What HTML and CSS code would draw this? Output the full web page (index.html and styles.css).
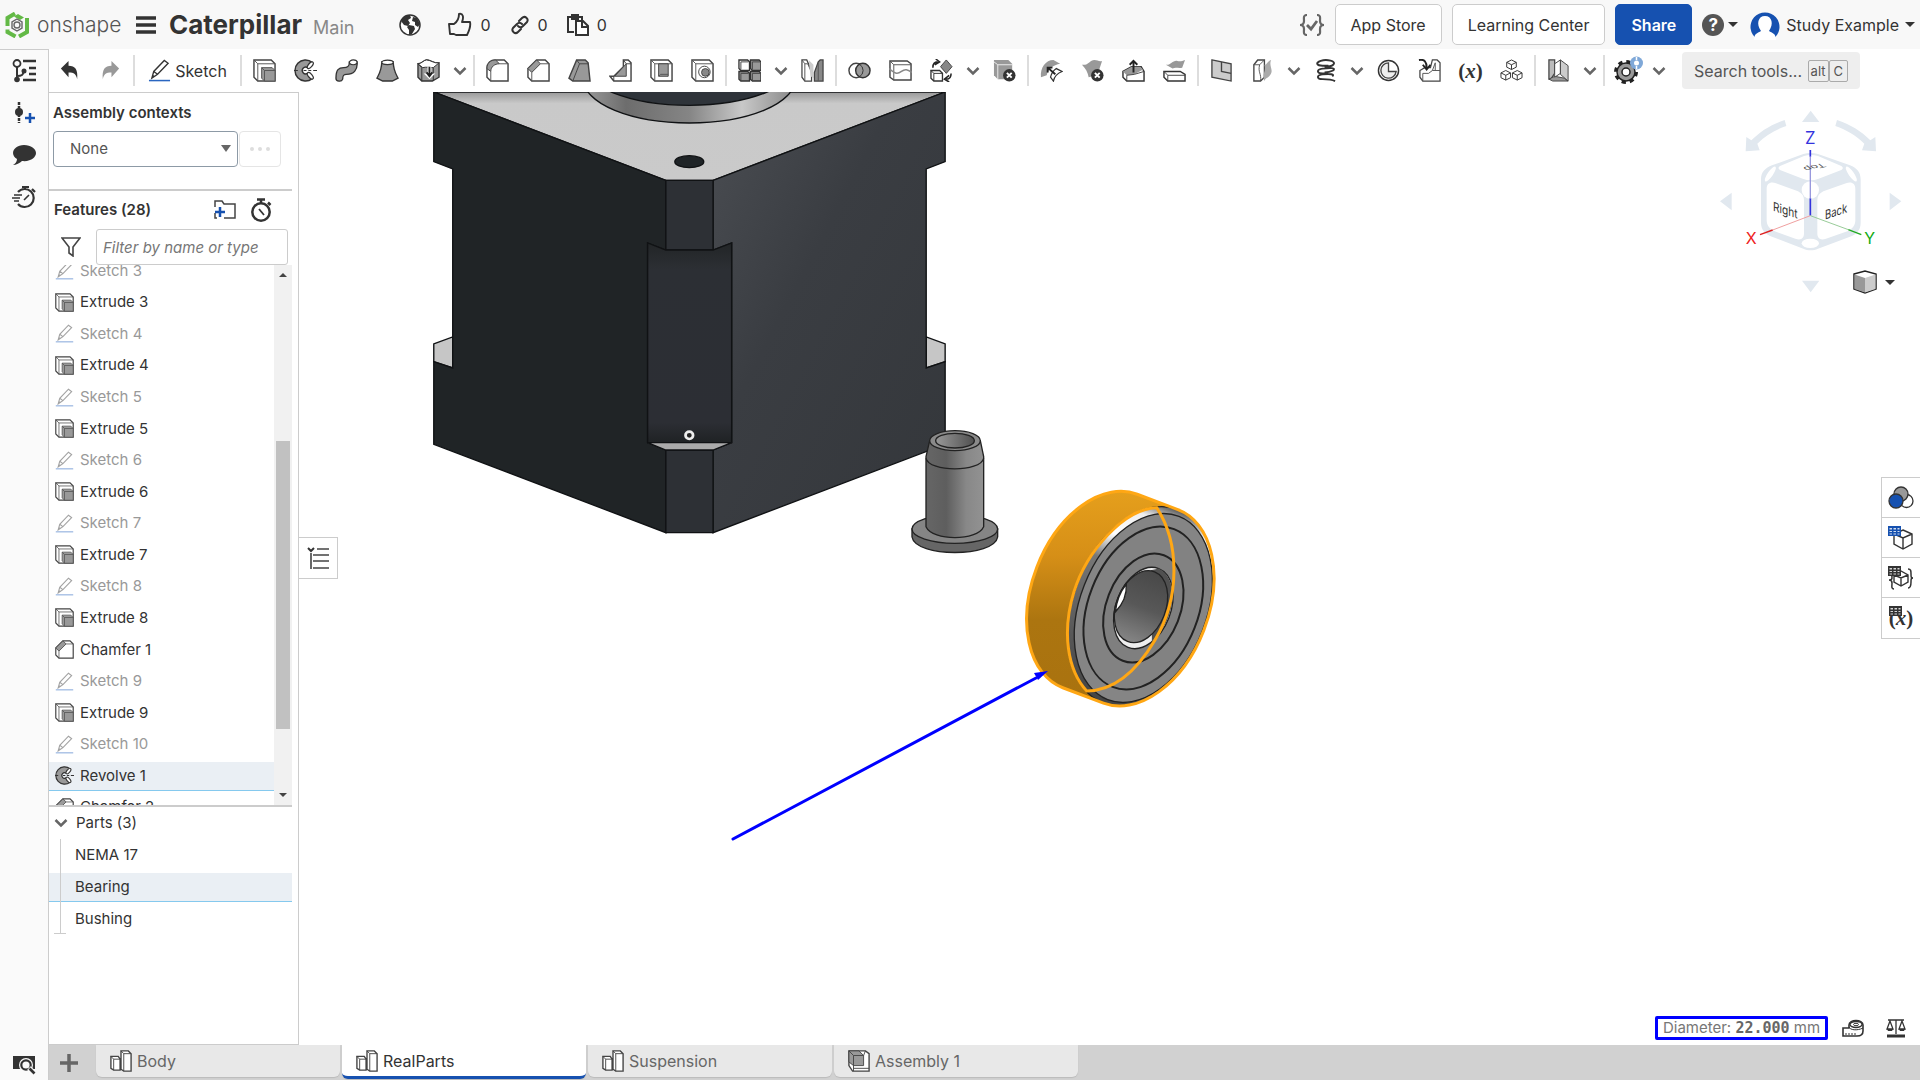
FILE: index.html
```html
<!DOCTYPE html>
<html lang="en">
<head>
  <meta charset="UTF-8" />
  <meta name="viewport" content="width=device-width, initial-scale=1.0" />
  <title>Caterpillar | RealParts</title>
  <link rel="stylesheet" href="styles.css">
</head>
<body>
  <!-- Icon sprite -->
  <svg class="sprite" aria-hidden="true">
    <symbol id="chev" viewBox="0 0 14 10"><path d="M1.500 2l5.500 5.500L12.500 2" fill="none" stroke="#666" stroke-width="2.500"/></symbol>
    <symbol id="undo" viewBox="0 0 24 24"><path d="M3 10l8-8v5c7 0 10 4 9 14-1-5-3-7-9-7v5z" fill="currentColor"/></symbol>
    <symbol id="redo" viewBox="0 0 24 24"><path d="M21 10l-8-8v5C6 7 3 11 4 21c1-5 3-7 9-7v5z" fill="currentColor"/></symbol>
    <symbol id="pencil" viewBox="0 0 24 24"><path d="M4 20l2-7L17 1.500l4 3L10 16zM6 13l4 3M4 20l2-3" fill="none" stroke="#333" stroke-width="1.400"/><path d="M1 22.500h22" stroke="#2a66c0" stroke-width="1.600"/></symbol>
    <symbol id="extrude" viewBox="0 0 24 24"><path d="M1 1h18l4 4v18H5l-4-4z" fill="#fff" stroke="#444" stroke-width="1.500"/><path d="M1 1l4 4v18M5 5h18" fill="none" stroke="#555"/><path d="M9 9h11l3 3v11H12l-3-3z" fill="#999" stroke="#555"/><path d="M9 9l3 3h11M12 12v11" fill="none" stroke="#555"/></symbol>
    <symbol id="revolve" viewBox="0 0 24 24"><path d="M19 3.500A11 11 0 1 0 19 20.500L14 15A3.500 3.500 0 1 1 14 9z" fill="#999" stroke="#333" stroke-width="1.500"/><ellipse cx="17" cy="6.500" rx="2" ry="4.200" transform="rotate(40 17 6.500)" fill="#fff" stroke="#333" stroke-width="1.300"/><ellipse cx="17" cy="17.500" rx="2" ry="4.200" transform="rotate(-40 17 17.500)" fill="#fff" stroke="#333" stroke-width="1.300"/><path d="M0 12h4M10 12h3M15 12h3M20 12h4" stroke="#333" stroke-width="1.300"/></symbol>
    <symbol id="sweep" viewBox="0 0 24 24"><path d="M1 20c0-9 3-11 8-11 4 0 6-1 6-6h8c1 9-4 13-11 13-3 0-4 1-4 5-1 3-7 3-7-1z" fill="#999" stroke="#333" stroke-width="1.400"/><ellipse cx="19" cy="3.500" rx="4" ry="2.500" fill="#fff" stroke="#333" stroke-width="1.300"/></symbol>
    <symbol id="loft" viewBox="0 0 24 24"><path d="M6 3c0 8-2 11-5 17l6 3h10l6-3C20 14 18 11 18 3z" fill="#999" stroke="#333" stroke-width="1.400"/><ellipse cx="12" cy="3.500" rx="6" ry="2.400" fill="#fff" stroke="#333" stroke-width="1.300"/></symbol>
    <symbol id="thicken" viewBox="0 0 24 24"><path d="M1 5c4 0 6-4 9-4 4 0 8 4 13 3v15l-7 4H5l-4-4z" fill="#999" stroke="#333" stroke-width="1.400"/><path d="M1 5c4 0 6-4 9-4 4 0 8 4 13 3l-6 5c-5 0-7-1-11 0z" fill="#fff" stroke="#333"/><path d="M1 5l4 4v14M17 9v14" fill="none" stroke="#333"/><path d="M11 8h4v7h4l-6 6-6-6h4z" fill="#fff"/><path d="M13 8v10M10 14l3 4 3-4" stroke="#222" stroke-width="2" fill="none"/></symbol>
    <symbol id="fillet" viewBox="0 0 24 24"><path d="M1 10C1 4 5 1 10 1h9l4 4v18H5l-4-4z" fill="#fff" stroke="#444" stroke-width="1.500"/><path d="M1 10C1 4 5 1 10 1l4 4c-5 0-9 3-9 8z" fill="#999" stroke="#444"/><path d="M5 13v10M14 5h9" stroke="#555"/></symbol>
    <symbol id="chamfer" viewBox="0 0 24 24"><path d="M1 10L10 1h9l4 4v18H5l-4-4z" fill="#fff" stroke="#444" stroke-width="1.500"/><path d="M1 10l9-9 4 4-9 9z" fill="#999" stroke="#444"/><path d="M5 14v9M14 5h9" stroke="#555"/></symbol>
    <symbol id="draft" viewBox="0 0 24 24"><path d="M9 1h9l3 3 2 19H5l-4-3z" fill="#999" stroke="#444" stroke-width="1.500"/><path d="M9 1l3 4L5 23M12 5h9" fill="none" stroke="#444"/></symbol>
    <symbol id="rib" viewBox="0 0 24 24"><path d="M15 1h5l3 3v19H5l-4-5h4L15 8z" fill="#fff" stroke="#444" stroke-width="1.500"/><path d="M18 5v13H6z" fill="#999" stroke="#444"/><path d="M15 1l3 4h5M5 18v5" fill="none" stroke="#444"/></symbol>
    <symbol id="shell" viewBox="0 0 24 24"><path d="M1 1h18l4 4v18H5l-4-4z" fill="#fff" stroke="#444" stroke-width="1.500"/><path d="M1 1l4 4v18M5 5h18" fill="none" stroke="#555"/><path d="M9 5h10v13H9z" fill="#999" stroke="#444"/><path d="M9 18l2-2h8" fill="none" stroke="#555"/></symbol>
    <symbol id="hole" viewBox="0 0 24 24"><path d="M1 1h18l4 4v18H5l-4-4z" fill="#fff" stroke="#444" stroke-width="1.500"/><path d="M1 1l4 4v18M5 5h18" fill="none" stroke="#555"/><circle cx="14" cy="13.500" r="6" fill="#fff" stroke="#444"/><circle cx="15" cy="14" r="4" fill="#888" stroke="#444"/></symbol>
    <symbol id="pattern" viewBox="0 0 24 24"><path d="M1 1h9l2 2v9H3l-2-2z" fill="#fff" stroke="#333" stroke-width="1.400"/><path d="M13 1h9l2 2v9h-9l-2-2zM1 13h9l2 2v8H3l-2-2zM13 13h9l2 2v8h-9l-2-2z" fill="#999" stroke="#333" stroke-width="1.400"/><path d="M3 3h8M15 3h8M3 15h8M15 15h8M3 3v8M15 3v8M3 15v8M15 15v8" stroke="#444"/></symbol>
    <symbol id="mirror" viewBox="0 0 24 24"><path d="M1 1h5l5 11v11H4l-3-4z" fill="#fff" stroke="#444" stroke-width="1.300"/><path d="M4 5v18M1 1l3 4h3l4 9" fill="none" stroke="#555"/><path d="M8 1l5 5v14l-3-2z" fill="#ccc"/><path d="M14 14l4-11 2-2h3v22h-9z" fill="#888" stroke="#444" stroke-width="1.300"/><path d="M18 3v20" stroke="#555"/></symbol>
    <symbol id="boolean" viewBox="0 0 24 24"><circle cx="8.500" cy="12" r="7.500" fill="#fff" stroke="#444" stroke-width="1.500"/><circle cx="15.500" cy="12" r="7.500" fill="#999" stroke="#333" stroke-width="1.500"/><path d="M12 5.500a7.500 7.500 0 0 1 0 13" fill="none" stroke="#333"/></symbol>
    <symbol id="split" viewBox="0 0 24 24"><path d="M1 2h18l4 3v17H5l-4-3z" fill="#fff" stroke="#444" stroke-width="1.500"/><path d="M1 2l4 4h18M5 6v16" fill="none" stroke="#555"/><path d="M0 10c7 6 9 6 13 3s6-2 11 1" fill="none" stroke="#888" stroke-width="1.600"/></symbol>
    <symbol id="transform" viewBox="0 0 24 24"><path d="M1 12h9l3 3v8H4l-3-3z" fill="#fff" stroke="#333" stroke-width="1.400"/><path d="M1 12l3 3h9M4 15v8" fill="none" stroke="#333"/><path d="M17 1l6 7-6 7-6-7z" fill="#888" stroke="#444"/><path d="M3 9c0-4 2-6 5-6M6 0l4 3-5 3M22 15c0 4-2 6-5 6M20 17l-5 4 5 3" stroke="#222" stroke-width="1.600" fill="none"/></symbol>
    <symbol id="delpart" viewBox="0 0 24 24"><path d="M1 1h15l4 4v16H5l-4-4z" fill="#999"/><path d="M1 3l4 3h15M5 6v15" stroke="#eee" fill="none"/><circle cx="17" cy="17" r="6.500" fill="#333"/><path d="M14.500 14.500l5 5M19.500 14.500l-5 5" stroke="#fff" stroke-width="2"/></symbol>
    <symbol id="modfillet" viewBox="0 0 24 24"><path d="M1 19C0 9 6 1 14 1l7 4C14 6 8 11 7 17z" fill="#999"/><path d="M14 23l-3-4c1-4 3-7 6-9l6 3c-5 2-8 5-9 10z" fill="#fff" stroke="#333" stroke-width="1.300"/><path d="M16 16L8 9M8 14V9h5" stroke="#222" stroke-width="2" fill="none"/></symbol>
    <symbol id="delface" viewBox="0 0 24 24"><path d="M1 6c7 1 8-5 13-5 3 0 5 2 8 1l-5 15-9 2C7 14 5 10 1 6z" fill="#999"/><circle cx="17" cy="17" r="6.500" fill="#333"/><path d="M14.500 14.500l5 5M19.500 14.500l-5 5" stroke="#fff" stroke-width="2"/></symbol>
    <symbol id="moveface" viewBox="0 0 24 24"><path d="M1 13l9-5h10l3 5v10H5l-4-4z" fill="#fff" stroke="#333" stroke-width="1.500"/><path d="M1 13l9-5h9l3 3-9 5-8 1z" fill="#999"/><path d="M5 17l8-1 10-3M5 17v6" stroke="#444" fill="none"/><path d="M12 14V3M8 6l4-4 4 4" stroke="#222" stroke-width="2" fill="none"/></symbol>
    <symbol id="replface" viewBox="0 0 24 24"><path d="M3 6c5 1 7-5 12-4 3 1 5 0 8-1l-3 8c-4 1-7-1-10 1z" fill="#999"/><path d="M1 13h17l5 3v7H5l-4-4z" fill="#fff" stroke="#333" stroke-width="1.500"/><path d="M1 13l4 4h18M5 17v6" fill="none" stroke="#444"/></symbol>
    <symbol id="plane" viewBox="0 0 24 24"><path d="M2 1l20 4v18L2 19z" fill="#ccc" stroke="#444" stroke-width="1.400"/><path d="M12 3v10l10 2" fill="none" stroke="#444" stroke-width="1.400"/></symbol>
    <symbol id="surface" viewBox="0 0 24 24"><path d="M3 6l4-5h7v18l-4 4H3z" fill="#fff" stroke="#444" stroke-width="1.400"/><path d="M14 6c3 0 3-4 7-5-3 7 4 11-2 17-2 2-4 2-5 5-3-8 2-9 0-17z" fill="#aaa"/><path d="M3 6h6l5-5M9 6c-2 8 2 9 1 17" fill="none" stroke="#555"/></symbol>
    <symbol id="helix" viewBox="0 0 24 24"><path d="M20 6C24 2 13 0 7 2 1 4 3 7 9 7h6M20 12c3-3-3-3-11-2-7 1-6 5 0 5h6M19 18c3-2-2-3-10-2-7 1-6 5 0 5 5 0 9 0 13 2M20 6c-1 1-4 2-9 2M20 12c-2 1-5 2-9 2" fill="none" stroke="#333" stroke-width="2"/></symbol>
    <symbol id="pie" viewBox="0 0 24 24"><circle cx="12" cy="12" r="10.500" fill="#fff" stroke="#333" stroke-width="1.500"/><path d="M12 4a8 8 0 1 0 8 9h-8z" fill="#eee" stroke="#444" stroke-width="1.400"/></symbol>
    <symbol id="derive" viewBox="0 0 24 24"><path d="M7 9h6l2-8h5l3 3v19H5l-3-4v-7z" fill="#fff" stroke="#444" stroke-width="1.300"/><path d="M15 12l3-8v8M5 15h6l4-3 8 0M5 15v8" stroke="#555" fill="none"/><path d="M1 1c6-1 8 2 8 8M5 6l4 5 4-5" fill="none" stroke="#222" stroke-width="2"/></symbol>
    <symbol id="cubes" viewBox="0 0 24 24"><g fill="#fff" stroke="#333"><path d="M12 1l5 2.500v5L12 11 7 8.500v-5zM7 3.500L12 6l5-2.500M12 6v5M6 12l5 2.500v5L6 22l-5-2.500v-5zM1 14.500L6 17l5-2.500M6 17v5M18 12l5 2.500v5L18 22l-5-2.500v-5zM13 14.500l5 2.500 5-2.500M18 17v5"/></g></symbol>
    <symbol id="sheet" viewBox="0 0 24 24"><path d="M2 1h6v14l-4 6H2z" fill="#bbb" stroke="#444" stroke-width="1.300"/><path d="M2 21l6-3 10 2 4 3H6z" fill="#999" stroke="#444"/><path d="M8 5l6-4v14l-6 4z" fill="#fff" stroke="#444"/><path d="M14 1l8 6v16l-8-7z" fill="#ccc" stroke="#444"/></symbol>
    <symbol id="gear" viewBox="0 0 30 30"><circle cx="13" cy="16" r="10" fill="none" stroke="#222" stroke-width="4" stroke-dasharray="4.100 3.754"/><circle cx="13" cy="16" r="9" fill="#999" stroke="#222" stroke-width="1.500"/><circle cx="13" cy="16" r="4" fill="#fff" stroke="#222" stroke-width="1.500"/><circle cx="23.500" cy="7" r="6.500" fill="#7fa8d8"/><circle cx="23.500" cy="7" r="2.500" fill="#fff"/><path d="M23.500 1v3M23.500 10v3" stroke="#fff" stroke-width="1.500"/></symbol>
    <symbol id="grid" viewBox="0 0 13 10"><path d="M0 0h13v10H0z" fill="currentColor"/><path d="M1.500 2h2.500v1.500H1.500zM5.500 2H8v1.500H5.500zM9.500 2h2v1.500h-2zM1.500 5h2.500v1H1.500zM5.500 5H8v1H5.500zM9.500 5h2v1h-2zM1.500 7.500h2.500v1H1.500zM5.500 7.500H8v1H5.500zM9.500 7.500h2v1h-2z" fill="#fff" opacity=".8"/></symbol>
    <symbol id="partstudio" viewBox="0 0 24 24"><path d="M1 7h8l2 3v12H4l-3-2zM12 1h8l3 3v19h-8l-3-2z" fill="#fff" stroke="#444" stroke-width="1.500"/><path d="M1 7l3 3h7M4 10v12M12 1l3 3h8M15 4v19" fill="none" stroke="#444"/></symbol>
    <symbol id="assembly" viewBox="0 0 24 24"><path d="M1 1h18l4 3v19H5l-4-6z" fill="#fff" stroke="#444" stroke-width="1.500"/><path d="M1 1h11l5 5v11H6l-5-4z" fill="#999" stroke="#444"/><path d="M1 1l5 5h11M6 6v17M19 1l-2 5M6 20h17" fill="none" stroke="#444"/></symbol>
    <symbol id="timer" viewBox="0 0 24 24"><circle cx="12" cy="14" r="8.700" fill="none" stroke="#333" stroke-width="2.500"/><path d="M8 1.500h8M12 2v3M19 4.500l2.500 2.500" stroke="#333" stroke-width="2.500"/><path d="M10 11l5 6" stroke="#333" stroke-width="1.800"/></symbol>
  </svg>

  <header class="topbar">
    <a class="brand" href="#">
      <svg width="24" height="26" viewBox="0 0 24 26"><path d="M10 1.500L2.500 6v8M22 6v14l-8 4.500M2.500 17.500V20l8 4.500" fill="none" stroke="#63b946" stroke-width="4"/><path d="M9 4.500L13 2l6 3.500-4 2.500" fill="#63b946"/><path d="M12 7l5 3v6l-5 3-5-3v-6z" fill="#f8f8f8" stroke="#666" stroke-width="1.400"/><circle cx="12" cy="13" r="3" fill="none" stroke="#666" stroke-width="1.400"/></svg>
      <span>onshape</span>
    </a>
    <button class="plain menu" aria-label="Menu"><svg width="20" height="20" viewBox="0 0 20 20"><path d="M0 3h20M0 10h20M0 17h20" stroke="#333" stroke-width="3.500"/></svg></button>
    <h1>Caterpillar</h1>
    <span class="branch">Main</span>
    <button class="plain globe" aria-label="Public document"><svg width="24" height="24" viewBox="0 0 24 24"><circle cx="12" cy="12" r="10" fill="#fff" stroke="#333" stroke-width="1.500"/><path d="M4 6c3-4 6-4 8-4l1 3-3 2 2 3-2 3-4-1-3-4zM11 12l5 1 1 3-3 5-3 1v-5l-2-3zM15 4l4 1 3 6-2 3-3-2 0-3-3-1z" fill="#333"/></svg></button>
    <button class="plain stat"><svg width="24" height="26" viewBox="0 0 24 26"><path d="M1 12h5c3-2 5-5 5-10 4-1 5 3 3 8h8c1 4-1 9-3 13H8l-2-1H2z" fill="none" stroke="#333" stroke-width="1.900" stroke-linejoin="round"/></svg>0</button>
    <button class="plain stat"><svg width="20" height="20" viewBox="0 0 20 20"><g fill="none" stroke="#333" stroke-width="2" stroke-linecap="round"><path d="M9 6l3-3c3-3 7 1 5 4l-4 4c-2 2-4 1-5 0"/><path d="M11 14l-3 3c-3 3-7-1-5-4l4-4c2-2 4-1 5 0"/></g></svg>0</button>
    <button class="plain stat"><svg width="22" height="22" viewBox="0 0 22 22"><path d="M7 18H1V3h14v4M5 1h6v4H5z" fill="none" stroke="#333" stroke-width="2"/><path d="M9 7h7l5 5v9H9zM15 7v6h6" fill="#fff" stroke="#333" stroke-width="2"/></svg>0</button>

    <div class="top-right">
      <button class="plain" aria-label="Custom checks"><svg width="26" height="22" viewBox="0 0 26 22"><path d="M8 1C4 1 5 4 5 7s-1 4-4 4c3 0 4 1 4 4s-1 6 3 6M18 1c4 0 3 3 3 6s1 4 4 4c-3 0-4 1-4 4s1 6-3 6" fill="none" stroke="#666" stroke-width="2.200"/><path d="M8 11l4 4 6-8" fill="none" stroke="#666" stroke-width="2.800"/></svg></button>
      <button class="btn">App Store</button>
      <button class="btn">Learning Center</button>
      <button class="btn share">Share</button>
      <button class="plain help" aria-label="Help"><span class="q">?</span><span class="caret"></span></button>
      <button class="plain user"><svg width="30" height="30" viewBox="0 0 30 30"><path d="M7 29A14.500 14.500 0 1 1 23 29z" fill="#1651b0"/><path d="M4 30c0-7 4-7 7-9-5-7-3-15 4-15s9 8 4 15c3 2 7 2 7 9z" fill="#fff"/></svg>Study Example<span class="caret"></span></button>
    </div>
  </header>

  <div class="app">
    <nav class="rail">
      <button class="plain" aria-label="Feature list"><svg width="24" height="24" viewBox="0 0 24 24"><circle cx="5" cy="4.500" r="3.500" fill="none" stroke="#333" stroke-width="1.800"/><path d="M5 8v12M5 17c5 0 6-1 7-5" fill="none" stroke="#333" stroke-width="2"/><circle cx="5" cy="20.500" r="2.800" fill="#333"/><circle cx="12" cy="12" r="2.500" fill="#333"/><path d="M11 2h13M17 9h7M17 15h7M11 21h13" stroke="#333" stroke-width="2.400"/></svg></button>
      <button class="plain" aria-label="Insert"><svg width="24" height="24" viewBox="0 0 24 24"><path d="M7 1v21" stroke="#333" stroke-width="2.500" stroke-dasharray="3 1"/><circle cx="7" cy="11" r="4" fill="#333"/><path d="M18 12v10M13 17h10" stroke="#1651b0" stroke-width="2.500"/></svg></button>
      <button class="plain" aria-label="Comments"><svg width="24" height="24" viewBox="0 0 24 24"><path d="M12 2c7 0 12 4 12 8s-5 9-14 8c-2 2-6 4-9 4 2-1 4-3 4-6-8-5-3-14 7-14z" fill="#333"/></svg></button>
      <button class="plain" aria-label="Performance"><svg width="24" height="24" viewBox="0 0 24 24"><path d="M6 7a9 9 0 1 1 0 12M10 2h7M13 2v3M20 4l3 3" fill="none" stroke="#333" stroke-width="2.200"/><path d="M2 10h8M0 13h8M2 16h5M12 15l5-5" stroke="#333" stroke-width="1.600"/></svg></button>
      <button class="plain rail-end" aria-label="Find tab"><svg width="24" height="22" viewBox="0 0 24 22"><path d="M1 3h22v13H1z" fill="#333"/><circle cx="14" cy="12" r="7" fill="#fafafa"/><circle cx="14" cy="12" r="4.700" fill="none" stroke="#333" stroke-width="2.200"/><path d="M17 15l6 6" stroke="#fafafa" stroke-width="5"/><path d="M17.500 15.500l5 5" stroke="#333" stroke-width="2.600"/></svg></button>
    </nav>

    <div class="content">
      <div class="toolbar" role="toolbar">
        <button class="tool" aria-label="Undo"><svg><use href="#undo"/></svg></button>
        <button class="tool off" aria-label="Redo"><svg><use href="#redo"/></svg></button>
        <i class="sep"></i>
        <button class="tool sketch"><svg><use href="#pencil"/></svg>Sketch</button>
        <i class="sep"></i>
        <button class="tool" aria-label="Extrude"><svg><use href="#extrude"/></svg></button>
        <button class="tool" aria-label="Revolve"><svg><use href="#revolve"/></svg></button>
        <button class="tool" aria-label="Sweep"><svg><use href="#sweep"/></svg></button>
        <button class="tool" aria-label="Loft"><svg><use href="#loft"/></svg></button>
        <button class="tool" aria-label="Thicken"><svg><use href="#thicken"/></svg></button>
        <button class="more" aria-label="More solids"><svg><use href="#chev"/></svg></button>
        <i class="sep"></i>
        <button class="tool" aria-label="Fillet"><svg><use href="#fillet"/></svg></button>
        <button class="tool" aria-label="Chamfer"><svg><use href="#chamfer"/></svg></button>
        <button class="tool" aria-label="Draft"><svg><use href="#draft"/></svg></button>
        <button class="tool" aria-label="Rib"><svg><use href="#rib"/></svg></button>
        <button class="tool" aria-label="Shell"><svg><use href="#shell"/></svg></button>
        <button class="tool" aria-label="Hole"><svg><use href="#hole"/></svg></button>
        <i class="sep"></i>
        <button class="tool" aria-label="Pattern"><svg><use href="#pattern"/></svg></button>
        <button class="more" aria-label="More patterns"><svg><use href="#chev"/></svg></button>
        <button class="tool" aria-label="Mirror"><svg><use href="#mirror"/></svg></button>
        <i class="sep"></i>
        <button class="tool" aria-label="Boolean"><svg><use href="#boolean"/></svg></button>
        <button class="tool" aria-label="Split"><svg><use href="#split"/></svg></button>
        <button class="tool" aria-label="Transform"><svg><use href="#transform"/></svg></button>
        <button class="more" aria-label="More transforms"><svg><use href="#chev"/></svg></button>
        <button class="tool" aria-label="Delete part"><svg><use href="#delpart"/></svg></button>
        <i class="sep"></i>
        <button class="tool" aria-label="Modify fillet"><svg><use href="#modfillet"/></svg></button>
        <button class="tool" aria-label="Delete face"><svg><use href="#delface"/></svg></button>
        <button class="tool" aria-label="Move face"><svg><use href="#moveface"/></svg></button>
        <button class="tool" aria-label="Replace face"><svg><use href="#replface"/></svg></button>
        <i class="sep"></i>
        <button class="tool" aria-label="Plane"><svg><use href="#plane"/></svg></button>
        <button class="tool" aria-label="Surface"><svg><use href="#surface"/></svg></button>
        <button class="more" aria-label="More surfaces"><svg><use href="#chev"/></svg></button>
        <button class="tool" aria-label="Helix"><svg><use href="#helix"/></svg></button>
        <button class="more" aria-label="More curves"><svg><use href="#chev"/></svg></button>
        <button class="tool" aria-label="Composite part"><svg><use href="#pie"/></svg></button>
        <button class="tool" aria-label="Derived"><svg><use href="#derive"/></svg></button>
        <button class="tool var" aria-label="Variable">(<em>x</em>)</button>
        <button class="tool" aria-label="Configurations"><svg><use href="#cubes"/></svg></button>
        <i class="sep"></i>
        <button class="tool" aria-label="Sheet metal"><svg><use href="#sheet"/></svg></button>
        <button class="more" aria-label="More sheet metal"><svg><use href="#chev"/></svg></button>
        <i class="sep"></i>
        <button class="tool gear" aria-label="Custom features"><svg><use href="#gear"/></svg></button>
        <button class="more" aria-label="More features"><svg><use href="#chev"/></svg></button>
        <button class="search">Search tools...<span class="keys"><kbd>alt</kbd><kbd>C</kbd></span></button>
      </div>

      <div class="workspace">
        <aside class="panel">
          <section class="contexts">
            <h2><label for="ctx">Assembly contexts</label></h2>
            <div class="ctx-row">
              <div class="select-wrap"><select id="ctx"><option>None</option></select></div>
              <button class="dots" aria-label="Context options"><i></i><i></i><i></i></button>
            </div>
          </section>
          <section class="features">
            <div class="feat-head">
              <h2>Features (28)</h2>
              <button class="plain" aria-label="Add folder"><svg width="24" height="22" viewBox="0 0 24 22"><path d="M2 8V2h7l2 3h11v14H11M2 14v5h2" fill="none" stroke="#444" stroke-width="1.500"/><path d="M7 8v10M2 13h10" stroke="#1651b0" stroke-width="2.500"/></svg></button>
              <button class="plain" aria-label="Regeneration times"><svg width="24" height="24"><use href="#timer"/></svg></button>
            </div>
            <div class="filter">
              <svg width="20" height="20" viewBox="0 0 20 20"><path d="M1 1h18l-7 9v9l-4-3v-6z" fill="none" stroke="#444" stroke-width="1.600"/></svg>
              <input type="text" placeholder="Filter by name or type" aria-label="Filter features">
            </div>
            <div class="scroll">
              <ul class="feature-list">
                <li class="dim"><svg><use href="#pencil"/></svg>Sketch 3</li>
                <li><svg><use href="#extrude"/></svg>Extrude 3</li>
                <li class="dim"><svg><use href="#pencil"/></svg>Sketch 4</li>
                <li><svg><use href="#extrude"/></svg>Extrude 4</li>
                <li class="dim"><svg><use href="#pencil"/></svg>Sketch 5</li>
                <li><svg><use href="#extrude"/></svg>Extrude 5</li>
                <li class="dim"><svg><use href="#pencil"/></svg>Sketch 6</li>
                <li><svg><use href="#extrude"/></svg>Extrude 6</li>
                <li class="dim"><svg><use href="#pencil"/></svg>Sketch 7</li>
                <li><svg><use href="#extrude"/></svg>Extrude 7</li>
                <li class="dim"><svg><use href="#pencil"/></svg>Sketch 8</li>
                <li><svg><use href="#extrude"/></svg>Extrude 8</li>
                <li><svg><use href="#chamfer"/></svg>Chamfer 1</li>
                <li class="dim"><svg><use href="#pencil"/></svg>Sketch 9</li>
                <li><svg><use href="#extrude"/></svg>Extrude 9</li>
                <li class="dim"><svg><use href="#pencil"/></svg>Sketch 10</li>
                <li class="selected"><svg><use href="#revolve"/></svg>Revolve 1</li>
                <li><svg><use href="#chamfer"/></svg>Chamfer 2</li>
              </ul>
              <div class="track"><i class="up"></i><i class="thumb"></i><i class="down"></i></div>
            </div>
          </section>
          <section class="parts">
            <h3><svg width="14" height="10"><use href="#chev"/></svg>Parts (3)</h3>
            <ul>
              <li>NEMA 17</li>
              <li class="selected">Bearing</li>
              <li>Bushing</li>
            </ul>
          </section>
        </aside>

        <main class="viewport">
          <!-- Modelled parts -->
          <svg class="model" width="941" height="808" viewBox="299 92 941 808">
            <defs>
              <linearGradient id="rightFace" x1="0" y1="0" x2="1" y2="1"><stop offset="0" stop-color="#4b4e53"/><stop offset=".4" stop-color="#3a3d42"/><stop offset="1" stop-color="#34373b"/></linearGradient>
              <linearGradient id="boss"><stop offset="0" stop-color="#9a9a9a"/><stop offset=".2" stop-color="#6d6d6d"/><stop offset=".5" stop-color="#858585"/><stop offset=".75" stop-color="#c8c8c8"/><stop offset="1" stop-color="#888"/></linearGradient>
              <linearGradient id="recess" x1="0" y1="0" x2="0" y2="1"><stop offset="0" stop-color="#222527"/><stop offset=".13" stop-color="#2c2f34"/><stop offset=".9" stop-color="#2c2e34"/><stop offset="1" stop-color="#1f2224"/></linearGradient>
              <linearGradient id="topFace" x1="0" y1="0" x2="0" y2="1"><stop offset="0" stop-color="#999"/><stop offset=".13" stop-color="#c9c9c9"/><stop offset="1" stop-color="#cacaca"/></linearGradient>
              <linearGradient id="tube"><stop offset="0" stop-color="#666"/><stop offset=".35" stop-color="#5e5e5e"/><stop offset=".7" stop-color="#888"/><stop offset="1" stop-color="#929292"/></linearGradient>
              <linearGradient id="tubeIn"><stop offset="0" stop-color="#999"/><stop offset="1" stop-color="#505050"/></linearGradient>
              <linearGradient id="orange" x1="0" y1="0" x2="0" y2="1"><stop offset="0" stop-color="#e59f1c"/><stop offset=".3" stop-color="#d68f17"/><stop offset=".6" stop-color="#ac7510"/><stop offset="1" stop-color="#a9720f"/></linearGradient>
              <linearGradient id="rim" x1="0" y1="0" x2="0" y2="1"><stop offset="0" stop-color="#555"/><stop offset=".08" stop-color="#eee"/><stop offset=".22" stop-color="#fff"/><stop offset=".35" stop-color="#777"/><stop offset="1" stop-color="#444"/></linearGradient>
              <linearGradient id="bore" x1="0" y1="0" x2="0" y2="1"><stop offset="0" stop-color="#484848"/><stop offset=".5" stop-color="#585858"/><stop offset="1" stop-color="#858585"/></linearGradient>
            </defs>
            <g transform="translate(420 90) scale(.34436 .33333)" stroke="#101214" stroke-width="4">
              <path d="M40 6H1525L851 271H714z" fill="url(#topFace)"/>
              <ellipse cx="782" cy="-30" rx="306" ry="129" fill="url(#boss)"/>
              <ellipse cx="782" cy="-82" rx="312" ry="128" fill="#2f343a"/>
              <ellipse cx="782" cy="215" rx="42" ry="18" fill="#1f2427"/>
              <path d="M40 762l55-21v93l-55-19zM1525 762l-55-21v93l55-19z" fill="#c6c6c6"/>
              <path d="M40 6L714 271V480L661 459V1058L714 1080V1328L40 1063V815L95 834V237L40 215z" fill="#202426"/>
              <path d="M1525 6L851 271V480L905 459V1058L851 1080V1328L1525 1063V815L1470 834V237L1525 215z" fill="url(#rightFace)"/>
              <path d="M714 271H851V480H714zM714 1080H851V1328H714z" fill="#2d3035"/>
              <path d="M661 459L714 480H851L905 459V1058H661z" fill="url(#recess)"/>
              <path d="M661 1058H905L851 1080H714z" fill="#aaa"/>
              <circle cx="782" cy="1036" r="11" fill="#222" stroke="#eee" stroke-width="8"/>
            </g>
            <g transform="translate(890 410) scale(.33333)" stroke="#222" stroke-width="4" fill="none">
              <path d="M66 357v24c10 62 247 62 257 0v-24z" fill="#666"/>
              <ellipse cx="194.500" cy="357" rx="128.500" ry="43" fill="#858585"/>
              <path d="M108 140L119 92h152l10 48V350c-20 44-153 44-173 0z" fill="url(#tube)"/>
              <path d="M108 145c10 42 163 42 173 0"/>
              <ellipse cx="195" cy="92" rx="76" ry="30" fill="#8a8a8a"/>
              <ellipse cx="195" cy="92" rx="58" ry="22" fill="url(#tubeIn)"/>

              <path d="M741.600 252.700L863.600 298.700A202.600 311 21.300 0 1 640.400 879.300L518.400 833.300A202.600 311 21.300 0 1 741.600 252.700z" fill="url(#orange)" stroke="none"/>
              <ellipse cx="752" cy="589" rx="202" ry="311" transform="rotate(21.300 752 589)" fill="url(#rim)"/>
              <g transform="rotate(21.300 760 594)">
                <ellipse cx="760" cy="594" rx="190" ry="295" fill="#858585"/>
                <ellipse cx="760" cy="594" rx="165" ry="254" fill="#828282" stroke-width="6"/>
                <ellipse cx="760" cy="594" rx="111" ry="170" fill="#7f7f7f" stroke-width="6"/>
                <ellipse cx="760" cy="594" rx="82" ry="127" fill="#eee"/>
                <path d="M760 467a82 127 0 0 1 60 210L740 480z" fill="#505050" stroke="none"/>
              </g>
              <ellipse cx="753" cy="590" rx="74" ry="112" transform="rotate(21.300 753 590)" fill="url(#bore)"/>
              <path d="M676 606c4-40 18-65 33-84 2 32-8 58-33 84z" fill="#fff"/>
              <g stroke="#ffa714" stroke-width="9">
                <path d="M741.600 252.700L863.600 298.700A202.600 311 21.300 0 1 640.400 879.300L518.400 833.300A202.600 311 21.300 0 1 741.600 252.700z"/>
                <path d="M800 293C700 296 590 425 552 545 515 665 532 780 590 843 680 842 745 775 795 690 870 565 870 400 800 293z"/>
              </g>
            </g>
            <path d="M733 839l303-161" stroke="#00f" stroke-width="3" stroke-linecap="round"/>
            <path d="M1048 671l-14 2 4 7z" fill="#00f"/>
          </svg>

          <button class="flyout" aria-label="Toggle panel"><svg width="22" height="22" viewBox="0 0 22 22"><path d="M1 1l3 3 3-3" fill="none" stroke="#333" stroke-width="2"/><path d="M4 6v16M10 2h12M6 8h16M6 14h16M6 21h16" stroke="#444" stroke-width="1.600"/></svg></button>

          <!-- View cube -->
          <div class="cube">
            <svg width="240" height="220" viewBox="0 0 720 660">
              <g fill="#e1e8ef">
                <path d="M392 62l26 34h-52zM392 607l26-35h-52zM120 334l35-26v53zM664 334l-35-26v53z"/>
                <path d="M314 90l5 18c-34 12-62 28-87 53l7 20-42 3 2-43 15 10c28-28 60-48 100-61zM471 90l-5 18c34 12 62 28 87 53l-7 20 42 3-2-43-15 10c-28-28-60-48-100-61z"/>
                <path d="M370 192c14-4 30-4 44 0l96 34c20 8 32 20 32 42V398c0 22-12 34-32 42l-96 36c-14 6-30 6-44 0l-94-36c-20-8-33-20-33-42V268c0-22 13-34 33-42z"/>
              </g>
              <g fill="#fff">
                <path d="M300 228l72-30c14-4 28-4 42 0l70 30c6 4 6 8 0 12l-68 26c-16 6-32 6-48 0l-68-26c-6-4-6-8 0-12zM260 296c0-16 12-22 28-16l66 24c12 6 18 14 18 26V430c0 16-10 22-26 16l-62-22c-16-8-24-18-24-34zM526 296c0-16-12-22-28-16l-68 24c-12 6-18 14-18 26V430c0 16 10 22 26 16l64-22c16-8 24-18 24-34z"/>
                <circle cx="391" cy="300" r="26"/><ellipse cx="391" cy="460" rx="26" ry="14"/>
                <ellipse cx="271" cy="252" rx="8" ry="27" transform="rotate(35 271 252)"/><ellipse cx="514" cy="252" rx="8" ry="27" transform="rotate(-35 514 252)"/>
              </g>
              <path d="M391 180v20M391 325v52" stroke="#33d" stroke-width="5"/><path d="M391 200v125" stroke="#99d" stroke-width="4"/>
              <path d="M391 377L278 420" stroke="#f0a0a0" stroke-width="3"/><path d="M278 420l-38 14" stroke="#d22" stroke-width="4"/>
              <path d="M391 377l114 42" stroke="#9c9" stroke-width="3"/><path d="M505 419l39 15" stroke="#2a2" stroke-width="4"/>
              <g font-family="Inter, sans-serif" font-size="38" text-anchor="middle">
                <text x="391" y="163" font-size="50" fill="#33d">Z</text>
                <text x="214" y="462" font-size="48" fill="#e22">X</text>
                <text x="569" y="462" font-size="48" fill="#1a1">Y</text>
                <text transform="matrix(.8 .26 0 1 316 374)" fill="#333">Right</text>
                <text transform="matrix(.75 -.24 0 1 468 378)" fill="#333">Back</text>
                <text transform="matrix(-.9 .2 -.5 -.4 397 226)" fill="#555">Top</text>
              </g>
            </svg>
            <button class="plain shade" aria-label="Shading"><svg width="24" height="24" viewBox="0 0 24 24"><path d="M1 4l11-3 11 3v15l-11 4-11-4z" fill="#fff" stroke="#222" stroke-width="1.500"/><path d="M1.500 4.500L12 8v14.500L1.500 19z" fill="#999"/><path d="M22.500 4.500L12 8v14.500L22.500 19z" fill="#ccc"/></svg><span class="caret"></span></button>
          </div>

          <div class="side-tools">
            <button aria-label="Appearance"><svg width="26" height="24" viewBox="0 0 26 24"><circle cx="18.500" cy="15" r="6.500" fill="#fff" stroke="#333" stroke-width="1.300"/><circle cx="13" cy="8" r="7" fill="#999" stroke="#333" stroke-width="1.300"/><circle cx="8" cy="15" r="7" fill="#1651b0" stroke="#333" stroke-width="1.300"/></svg></button>
            <button aria-label="Bill of materials"><svg width="26" height="24" viewBox="0 0 26 24"><path d="M15 4l9 4v10l-9 5-9-5V8zM6 8l9 4 9-4M15 12v11" fill="#fff" stroke="#333" stroke-width="1.400"/><use href="#grid" width="13" height="10" class="blue"/></svg></button>
            <button aria-label="Configuration table"><svg width="26" height="24" viewBox="0 0 26 24"><path d="M13 5l7 4v7l-7 4-7-4V9zM6 9l7 3 7-3M13 12v8" fill="#fff" stroke="#333" stroke-width="1.400"/><path d="M6 9c-3 0-2 2-2 3s-1 2-3 2c2 0 3 1 3 3 0 3-1 6 2 6M20 3c3 0 3 2 3 5s0 4 2 4c-2 0-2 1-2 4s0 6-3 6" fill="none" stroke="#333" stroke-width="1.500"/><use href="#grid" width="13" height="10"/></svg></button>
            <button class="var" aria-label="Variable table">(<em>x</em>)<svg width="13" height="10"><use href="#grid"/></svg></button>
          </div>

          <div class="status">
            <output class="measure">Diameter: <b>22.000</b> mm</output>
            <button class="plain" aria-label="Measure"><svg width="22" height="18" viewBox="0 0 22 18"><path d="M1 9h6v-3c0-6 14-6 14 0v6c0 3-2 5-6 5H1z" fill="#fff" stroke="#333" stroke-width="1.600"/><ellipse cx="14" cy="5.500" rx="6" ry="3" fill="none" stroke="#333" stroke-width="1.300"/><ellipse cx="14" cy="5.500" rx="2.500" ry="1.200" fill="none" stroke="#333"/><path d="M7 8c1 3 8 4 14 1M4 16v-2M7 16v-2M10 16v-2M13 16v-2" fill="none" stroke="#333"/></svg></button>
            <button class="plain" aria-label="Mass properties"><svg width="20" height="20" viewBox="0 0 20 20"><path d="M1 18h18" stroke="#333" stroke-width="3"/><path d="M2 2h16M10 2v14M4 3L1 11h6zM16 3l-3 8h6z" fill="none" stroke="#333" stroke-width="1.300"/><path d="M1 11h6l-1 2H2zM13 11h6l-1 2h-4z" fill="#333"/></svg></button>
          </div>
        </main>
      </div>

      <footer class="tabs">
        <button class="plain add" aria-label="Add tab"><svg width="18" height="18" viewBox="0 0 18 18"><path d="M9 0v18M0 9h18" stroke="#666" stroke-width="3.500"/></svg></button>
        <a class="tab" href="#"><svg><use href="#partstudio"/></svg>Body</a>
        <a class="tab active" href="#"><svg><use href="#partstudio"/></svg>RealParts</a>
        <a class="tab" href="#"><svg><use href="#partstudio"/></svg>Suspension</a>
        <a class="tab" href="#"><svg><use href="#assembly"/></svg>Assembly 1</a>
      </footer>
    </div>
  </div>
</body>
</html>
```
FILE: styles.css
```css
:root{
  --text:#333;
  --blue:#1651b0;
  --line:#ccc;
  --hover:#eaeff4;
}
*{box-sizing:border-box}
body{margin:0;height:100vh;display:flex;flex-direction:column;overflow:hidden;font:15px/20px Inter,'Open Sans',sans-serif;color:var(--text);background:#fff}
h1,h2,h3,ul{margin:0;padding:0}
ul{list-style:none}
a{color:inherit;text-decoration:none}
button{font:inherit;color:inherit;cursor:pointer;padding:0}
svg{display:block;flex:none}
.sprite{position:absolute;width:0;height:0}
.plain{border:none;background:none;display:flex;align-items:center}
.caret{border:5px solid transparent;border-top-color:#333;border-bottom:none}

/* header */
.topbar{height:49px;flex:none;display:flex;align-items:center;background:#f8f8f8;padding:0 5px}
.brand{display:flex;align-items:center;gap:8px;width:131px;font-size:21px;font-weight:300;color:#555}
.menu{width:33px}
h1{font-size:26px;line-height:32px;font-weight:700}
.branch{font-size:18px;color:#888;margin-left:11px;padding-top:7px}
.globe{margin:0 26px 0 44px}
.stat{gap:8px;font-size:16px;margin-right:19px}
.top-right{margin-left:auto;display:flex;align-items:center;gap:10px}
.btn{height:41px;padding:0 15px;background:#fff;border:1px solid var(--line);border-radius:5px;font-size:16px}
.share{background:var(--blue);border-color:var(--blue);color:#fff;font-weight:600}
.help{gap:4px;margin-right:2px}
.q{width:22px;height:22px;border-radius:50%;background:#555;color:#fff;font-weight:700;font-size:17px;line-height:22px}
.user{gap:6px;font-size:16px}

/* shell */
.app{flex:1;min-height:0;display:flex}
.rail{width:49px;flex:none;background:#fafafa;border:1px solid var(--line);border-width:1px 1px 0 0;display:flex;flex-direction:column;align-items:center;padding-top:9px;gap:18px}
.rail-end{margin-top:auto;padding-bottom:5px}
.content{flex:1;min-width:0;display:flex;flex-direction:column}

/* toolbar */
.toolbar{height:43px;flex:none;display:flex;align-items:center}
.tool,.more{border:none;background:none;height:40px;display:flex;align-items:center;justify-content:center}
.tool{width:41px}
.tool svg{width:23px;height:23px}
.more{width:22px}
.more svg{width:14px;height:10px}
.off{color:#999}
.sketch{width:101px;gap:4px;font-size:16px}
.sep{width:2px;height:31px;background:#ddd;margin:0 2px}
.var{font:bold 21px/24px 'Liberation Serif',serif}
.gear svg{width:30px;height:30px}
.search{height:37px;margin-left:12px;width:178px;padding:0 12px;border:none;border-radius:4px;background:#eee;color:#555;font-size:16px;display:flex;align-items:center;justify-content:space-between}
.keys{display:flex}
kbd{font:13px/20px Inter,sans-serif;border:1px solid #aaa;border-radius:2px;padding:0 2px;height:22px}
kbd+kbd{padding:0 4px}

/* left panel */
.workspace{flex:1;min-height:0;display:flex}
.panel{width:250px;flex:none;display:flex;flex-direction:column;border:1px solid var(--line);border-left:none}
h2{font-size:15px;line-height:20px;font-weight:600}
.contexts{margin-right:6px;padding:10px 0 22px 4px;border-bottom:2px solid var(--line)}
.ctx-row{display:flex;gap:1px;margin-top:8px}
.select-wrap{position:relative;width:185px}
.select-wrap::after{content:"";position:absolute;right:7px;top:14px;border:5px solid transparent;border-top:7px solid #666;border-bottom:none}
select{appearance:none;width:100%;height:36px;border:1px solid #8d9aa6;border-radius:4px;background:#fff;padding:0 16px;font:inherit;color:#555}
.dots{width:42px;height:36px;border:1px solid #e5e5e5;border-radius:4px;background:#fff;display:flex;align-items:center;justify-content:center;gap:4px}
.dots i{width:4px;height:4px;border-radius:50%;background:#ddd}
.features{flex:1;min-height:0;display:flex;flex-direction:column;margin-right:6px;border-bottom:2px solid var(--line)}
.feat-head{display:flex;align-items:center;gap:12px;height:38px;padding:0 19px 0 5px}
.feat-head h2{flex:1}
.filter{display:flex;align-items:center;justify-content:space-between;padding:0 4px 0 12px}
.filter input{width:192px;height:36px;border:1px solid var(--line);border-radius:3px;padding:0 6px;font:inherit;font-style:italic}
.filter input::placeholder{color:#777}
.scroll{flex:1;min-height:0;overflow:hidden;display:flex}
.feature-list{flex:1;height:568px;margin-top:-10px;display:flex;flex-direction:column}
.feature-list li{flex:1;display:flex;align-items:center;gap:6px;padding-left:6px;margin:2px 0 1px;border-bottom:1px solid transparent}
.feature-list svg{width:19px;height:19px}
.dim{color:#999}
.dim svg{opacity:.45}
.feature-list .selected,.parts .selected{background:var(--hover);border-color:#85c9ee}
.track{width:18px;background:#f1f1f1;display:flex;flex-direction:column;align-items:center;justify-content:space-between;padding:8px 0}
.track .thumb{width:14px;height:288px;background:#c1c1c1;margin-top:100px}
.up{border:4px solid transparent;border-bottom-color:#444;border-top:none}
.down{border:4px solid transparent;border-top-color:#444;border-bottom:none}
.parts{height:237px;flex:none}
h3{display:flex;align-items:center;gap:8px;height:32px;padding-left:5px;font-size:15px;font-weight:400}
.parts ul{position:relative;width:243px}
.parts ul::before{content:"";position:absolute;left:11px;top:0;bottom:0;width:1px;background:var(--line)}
.parts ul::after{content:"";position:absolute;left:5px;bottom:0;width:12px;height:1px;background:var(--line)}
.parts li{height:29px;line-height:28px;padding-left:26px;margin-bottom:3px;border-bottom:1px solid transparent}
.parts ul{padding-top:2px}

/* canvas */
.viewport{flex:1;min-width:0;position:relative;overflow:hidden}
.flyout{position:absolute;left:-1px;top:445px;width:40px;height:42px;border:1px solid var(--line);border-left:none;background:#fff;display:flex;align-items:center;justify-content:center}
.cube{position:absolute;right:0;top:-2px}
.shade{position:absolute;left:173px;top:180px;gap:8px}
.side-tools{position:absolute;right:0;top:385px;width:39px;border:1px solid var(--line);border-right:none;background:#fff}
.side-tools button{position:relative;display:flex;align-items:center;justify-content:center;width:100%;height:40px;border:none;border-bottom:1px solid var(--line);background:none}
.side-tools button:last-child{border-bottom:none}
.side-tools .var svg{position:absolute;left:7px;top:8px}
.blue{color:var(--blue)}
.status{position:absolute;right:14px;bottom:5px;display:flex;align-items:center;gap:14px}
.status button{padding-left:8px}
.measure{border:3px solid #00f;border-radius:2px;width:173px;height:24px;line-height:18px;font-size:15px;color:#777;text-align:center;white-space:nowrap;margin-right:-8px}
.measure b{font:bold 15px/18px 'DejaVu Sans Mono',monospace;color:#666}

/* document tabs */
.tabs{height:35px;flex:none;display:flex;align-items:flex-start;gap:2px;background:#d1d1d1;font-size:16px}
.add{width:45px;height:35px;padding-left:11px}
.tab{width:244px;height:32px;display:flex;align-items:center;gap:5px;padding-left:14px;background:#e8e8e8;border-radius:0 0 6px 6px;box-shadow:0 1px 1px #bbb;color:#666}
.tab svg{width:22px;height:22px}
.tab.active{height:34px;background:#fff;border-bottom:3px solid var(--blue);color:#333}
```
